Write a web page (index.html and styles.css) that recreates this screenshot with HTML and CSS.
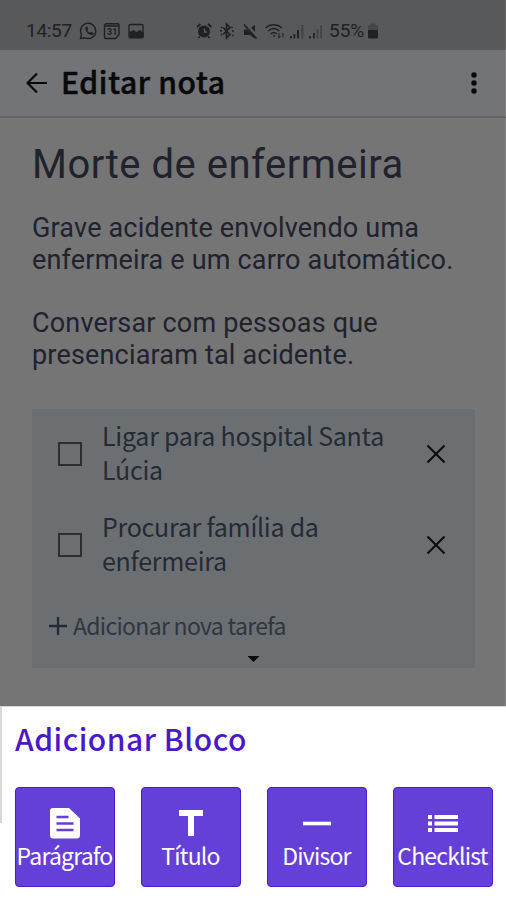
FILE: index.html
```
<!DOCTYPE html>
<html lang="pt-BR">
<head>
<meta charset="utf-8">
<title>Editar nota</title>
<link rel="stylesheet" href="styles.css">
</head>
<body>
<div class="screen">
  <div class="status">
    <span class="clock">14:57</span>
    <svg class="notif" width="66" height="20" viewBox="0 0 66 20">
      <g fill="none" stroke="currentColor" stroke-width="1.4">
        <path d="M1.500 17.500l1-4A7.600 7.600 0 1 1 6 16.800z"/>
        <path d="M27 2.700h11.500a1.500 1.500 0 0 1 1.500 1.500v9.500l-3.500 3.800H27a1.500 1.500 0 0 1-1.500-1.500V4.200A1.500 1.500 0 0 1 27 2.700zM25.500 5h14.500"/>
        <rect x="50" y="3.500" width="14" height="13.200" rx="1.200"/>
      </g>
      <path fill="currentColor" d="M6.500 6l1.600-.4 1.200 2.500-.9 1.100c.6 1.300 1.400 2 2.600 2.600l1.100-1 2.400 1.200-.4 1.700c-4 1.300-8.800-3.500-7.600-7.700zM50.500 11l4-2 3 2 3-2 4 2.500v5.500H50.500z"/>
      <text class="cal" x="28" y="14">31</text>
    </svg>
    <svg class="system" width="126" height="20" viewBox="0 0 126 20">
      <circle cx="8" cy="10.500" r="6" fill="currentColor"/>
      <path d="M8.500 7.500v3.500h2.500" fill="none" stroke="#58595b" stroke-width="1.300"/>
      <g fill="none" stroke="currentColor" stroke-width="1.700">
        <path d="M1 6l3.500-3M12 3l3.500 3M4 15.500l-1.500 1.500M12 15.500l1.500 1.500"/>
        <path d="M27 6.500l7 7-3.500 3.500V3L34 6.500l-7 7M24 10h2M36 10h2M25 6l1 .8M36.500 14l1 .8M25 14l1-.8M36.500 6l-1 .8"/>
        <path d="M48 3.500l12.500 14" stroke-width="1.700"/>
        <path d="M69.500 7c4.800-4.300 11.500-4.300 16.500 0M72 10c3.500-3 8-3 11.500 0M74.500 13c2-1.800 4.500-1.800 6.500 0" stroke-width="1.400"/>
        <path d="M83 12v4.500M81.500 15l1.500 1.700 1.500-1.700M87 16.500V12" stroke-width="1"/>
      </g>
      <path fill="currentColor" d="M48 8.500h3l8 8v1.200L54 14h-6zM55 6.500L59 4v7zM77 13.500l2.200 1-1.400 2.300zM94 15h1.800v2.500H94zM97.500 13h1.800v4.500h-1.800zM101 9h2v8.500h-2zM113 15h1.800v2.500H113zM117 12h1.800v5.500H117z"/>
      <path fill="currentColor" opacity=".35" d="M105 4h2.500v13.500H105zM120.500 8h2v9.500h-2zM124 4h2v13.500h-2z"/>
    </svg>
    <span class="percent">55%</span>
    <svg width="12" height="18" viewBox="0 0 12 18"><path fill="currentColor" opacity=".35" d="M3.500 1.500h5V3H10l1 1v4H1V4l1-1h1.500z"/><path fill="currentColor" d="M1 8h10v7.500l-1 1H2l-1-1z"/></svg>
  </div>
  <header class="bar">
    <svg class="back" width="22" height="22" viewBox="0 0 22 22"><path d="M21 11H1.500M11 1.500L1.500 11l9.500 9.500" fill="none" stroke="currentColor" stroke-width="2.200"/></svg>
    <h1>Editar nota</h1>
    <svg class="more" width="6" height="24" viewBox="0 0 6 24"><g fill="currentColor"><circle cx="3" cy="4" r="2.700"/><circle cx="3" cy="12" r="2.700"/><circle cx="3" cy="20" r="2.700"/></g></svg>
  </header>
  <main class="note">
    <h2>Morte de enfermeira</h2>
    <p>Grave acidente envolvendo uma<br>enfermeira e um carro automático.</p>
    <p>Conversar com pessoas que<br>presenciaram tal acidente.</p>
    <section class="tasks">
      <div class="task">
        <span class="box"></span>
        <span class="label">Ligar para hospital Santa<br>Lúcia</span>
        <svg width="20" height="20" viewBox="0 0 20 20"><path d="M1.500 1.500l17 17M18.500 1.500l-17 17" fill="none" stroke="currentColor" stroke-width="2.100"/></svg>
      </div>
      <div class="task">
        <span class="box"></span>
        <span class="label">Procurar família da<br>enfermeira</span>
        <svg width="20" height="20" viewBox="0 0 20 20"><path d="M1.500 1.500l17 17M18.500 1.500l-17 17" fill="none" stroke="currentColor" stroke-width="2.100"/></svg>
      </div>
      <div class="new">
        <svg width="20" height="20" viewBox="0 0 20 20"><path d="M10 1v18M1 10h18" fill="none" stroke="currentColor" stroke-width="2.300"/></svg>
        <span>Adicionar nova tarefa</span>
      </div>
      <div class="caret"></div>
    </section>
  </main>
  <section class="sheet">
    <h3>Adicionar Bloco</h3>
    <div class="blocks">
      <button class="block">
        <svg width="40" height="36" viewBox="0 0 40 36"><path fill="#fff" d="M8 3h16l11 10.500v16.500a3.500 3.500 0 0 1-3.500 3.500H8A3 3 0 0 1 5 30.500V6a3 3 0 0 1 3-3z"/><path d="M11.500 12h12M11.500 18.500h17M11.500 25h17" stroke="#6540d8" stroke-width="2.600"/></svg>
        <span>Parágrafo</span>
      </button>
      <button class="block">
        <svg width="40" height="36" viewBox="0 0 40 36"><path fill="#fff" d="M8 5h24v6h-9v20h-6V11H8z"/></svg>
        <span>Título</span>
      </button>
      <button class="block">
        <svg width="40" height="36" viewBox="0 0 40 36"><path d="M6 18.500h28" stroke="#fff" stroke-width="3.600"/></svg>
        <span>Divisor</span>
      </button>
      <button class="block">
        <svg width="40" height="36" viewBox="0 0 40 36"><path d="M5 12h4M5 18.500h4M5 25h4M11.500 12H35M11.500 18.500H35M11.500 25H35" stroke="#fff" stroke-width="4"/></svg>
        <span>Checklist</span>
      </button>
    </div>
  </section>
</div>
</body>
</html>
```
FILE: styles.css
```
* { box-sizing: border-box; }
body { margin: 0; background: #fff; }
h1, h2, h3, p { margin: 0; font-weight: 400; }
svg { flex: none; display: block; }
.screen {
  width: 506px; height: 900px; overflow: hidden;
  display: flex; flex-direction: column;
  font-family: "Noto Sans CJK JP", "Noto Sans", sans-serif;
  white-space: nowrap;
  background: #757575;
}
.status {
  height: 50px; padding: 11px 0 0 26px;
  display: flex; align-items: center;
  background: #58595b; color: #202123;
  border-right: 1px solid #6b6b6c;
  font-family: Roboto, sans-serif; font-size: 19px; line-height: 22px;
}
.clock { width: 46px; margin-right: 7px; letter-spacing: -.3px; }
.notif { margin-right: 51px; }
.cal { font: 700 9px Roboto, sans-serif; fill: currentColor; }
.percent { width: 38px; margin-left: 7px; }
.bar {
  height: 68px; padding: 0 28px 0 26px;
  display: flex; align-items: center;
  background: #737477; color: #08090b;
  border-bottom: 2px solid #626365;
  border-right: 1px solid #858587;
}
.back { margin-right: 13px; }
.bar h1 {
  font-size: 30px; line-height: 40px; font-weight: 500; letter-spacing: .65px;
  margin-bottom: 4px; -webkit-text-stroke: .5px currentColor;
}
.more { margin-left: auto; }
.note {
  height: 588px; padding: 23px 29px 0 32px;
  border-right: 1px solid #858585;
  background: #757575; color: #20222d;
}
.note h2 { font: 400 40px/48px Roboto, sans-serif; letter-spacing: .5px; margin-bottom: 23px; }
.note p { font: 400 27px/32px Roboto, sans-serif; letter-spacing: .18px; margin-bottom: 31px; }
.tasks {
  margin-top: 38px; width: 443px; height: 259px;
  background: #6c6f72; color: #252a34;
}
.task {
  height: 91px; padding: 0 29px 0 26px;
  display: flex; align-items: center;
  border-bottom: 1px solid #696c70;
}
.task svg { color: #0c0d0f; margin-left: auto; }
.box { width: 24px; height: 24px; border: 2px solid #2c2e31; margin-right: 20px; }
.label { font-size: 25px; line-height: 34px; letter-spacing: -.26px; margin-bottom: 4px; }
.new { height: 70px; padding-left: 16px; display: flex; align-items: center; gap: 5px; }
.new span { font-size: 23px; line-height: 30px; letter-spacing: -.7px; color: #30353f; margin-bottom: 3px; }
.caret {
  width: 12px; height: 6px; margin: -5px auto 0;
  background: #08090a; clip-path: polygon(0 0, 100% 0, 50% 100%);
}
.sheet {
  flex: 1; padding: 12px 13px 0 13px;
  background: #fff; border-top: 1px solid #b5b5b5;
  border-left: 2px solid;
  border-image: linear-gradient(#d8d8d8 60%, #fff 60%) 1;
  border-right: 0;
}
.sheet h3 { font-size: 30px; line-height: 38px; font-weight: 500; color: #4b18c8; letter-spacing: .5px; }
.blocks { margin-top: 30px; display: flex; justify-content: space-between; }
.block {
  width: 100px; height: 100px; padding: 17px 0 0;
  display: flex; flex-direction: column; align-items: center;
  border: 1px solid #4b1cc0; border-radius: 4px;
  background: #6540d8; color: #fff;
  font: 400 23px/30px "Noto Sans CJK JP", sans-serif;
  letter-spacing: -.8px;
}
.block span { margin: -1px 1px 0 0; }
```
